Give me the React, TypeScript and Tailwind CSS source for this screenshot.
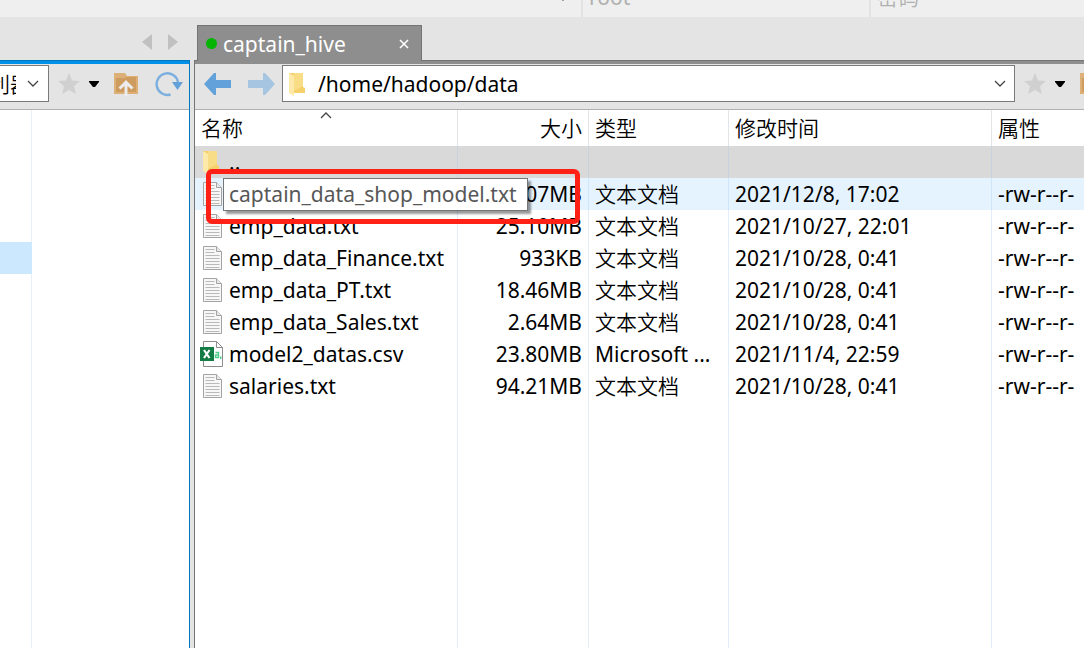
import { useState } from 'react'
import clsx from 'clsx'

type FileKind = 'up' | 'text' | 'csv'

type FileRow = {
  kind: FileKind
  name: string
  size?: string
  type?: string
  modified?: string
  attrs?: string
}

const files: FileRow[] = [
  { kind: 'up', name: '..' },
  { kind: 'text', name: 'captain_data_shop_model.txt', size: '07MB', type: '文本文档', modified: '2021/12/8, 17:02', attrs: '-rw-r--r-' },
  { kind: 'text', name: 'emp_data.txt', size: '25.10MB', type: '文本文档', modified: '2021/10/27, 22:01', attrs: '-rw-r--r-' },
  { kind: 'text', name: 'emp_data_Finance.txt', size: '933KB', type: '文本文档', modified: '2021/10/28, 0:41', attrs: '-rw-r--r-' },
  { kind: 'text', name: 'emp_data_PT.txt', size: '18.46MB', type: '文本文档', modified: '2021/10/28, 0:41', attrs: '-rw-r--r-' },
  { kind: 'text', name: 'emp_data_Sales.txt', size: '2.64MB', type: '文本文档', modified: '2021/10/28, 0:41', attrs: '-rw-r--r-' },
  { kind: 'csv', name: 'model2_datas.csv', size: '23.80MB', type: 'Microsoft ...', modified: '2021/11/4, 22:59', attrs: '-rw-r--r-' },
  { kind: 'text', name: 'salaries.txt', size: '94.21MB', type: '文本文档', modified: '2021/10/28, 0:41', attrs: '-rw-r--r-' },
]

const HOVERED = 1

function Chevron({ up = false }: { up?: boolean }) {
  return (
    <svg width="12" height="7" viewBox="0 0 12 7" fill="none" stroke="#444" strokeWidth="1.3">
      <path d={up ? 'M1 6l5-5 5 5' : 'M1 1l5 5 5-5'} />
    </svg>
  )
}

function Star() {
  return (
    <svg width="24" height="24" viewBox="0 0 24 24" fill="#d0d0d0">
      <path d="M12 1l3 7.500 8 .6-6 5.200 2 7.700-7-4-7 4 2-7.700-6-5.200 8-.6z" />
    </svg>
  )
}

function Caret() {
  return (
    <svg width="10" height="6" viewBox="0 0 10 6">
      <path d="M0 0h10v1L6 6H4L0 1z" fill="#000" />
    </svg>
  )
}

function FolderUp() {
  return (
    <svg width="26" height="24" viewBox="0 0 26 24">
      <path d="M1 1h11l2 3h11v18H1z" fill="#ddb077" />
      <path d="M3 6h9l2-1h9v15H3z" fill="#cf9c5f" />
      <path d="M13 8l7.500 7.500-2 2-4-3.500V24h-3V14l-4 3.500-2-2z" fill="#ececec" />
    </svg>
  )
}

function Refresh() {
  return (
    <svg width="28" height="26" viewBox="0 0 28 26">
      <path d="M15.500 23.500A10.800 10.800 0 1 1 23 11" fill="none" stroke="#7aafdf" strokeWidth="2.400" />
      <path d="M17 11h11l-5.500 8z" fill="#62a1da" />
    </svg>
  )
}

function Arrow({ dir }: { dir: 'back' | 'forward' }) {
  return (
    <svg width="27" height="22" viewBox="0 0 27 22">
      {dir === 'back' ? (
        <path d="M0 11L10 0h2v7h15v8H12v7h-2z" fill="#62a1da" />
      ) : (
        <path d="M27 11L17 0h-2v7H0v8h15v7h2z" fill="#a5c5e1" />
      )}
    </svg>
  )
}

function Folder() {
  return (
    <>
      <path d="M3 1h14v14l2 1v5H8z" fill="#f5d06b" />
      <path d="M8 1h9v13l-9 5z" fill="#f9dd86" />
      <path d="M3 1l5 3v20l-5-3z" fill="#fde9a9" />
    </>
  )
}

function FileIcon({ kind }: { kind: FileKind }) {
  return (
    <svg className="shrink-0" width="24" height="26" viewBox="0 0 24 26">
      {kind === 'up' && <g transform="translate(0 1)"><Folder /></g>}
      {kind === 'text' && (
        <>
          <path d="M3.500 1.500h13l5 5v18h-18z" fill="#f7f7f7" stroke="#a3a3a3" />
          <path d="M16.500 1.500v5h5" fill="#e9e9e9" stroke="#a3a3a3" />
          <path d="M5.500 4.500h9M5.500 7.500h9M5.500 10.500h14M5.500 13.500h14M5.500 16.500h14M5.500 19.500h14M5.500 22.500h14" stroke="#b9b9b9" />
        </>
      )}
      {kind === 'csv' && (
        <>
          <path d="M3.500.500h13l6 6v19h-19z" fill="#fff" stroke="#8c8c8c" />
          <path d="M16.500.500v6h6" fill="none" stroke="#8c8c8c" />
          <path d="M0 6h14v14H0z" fill="#137c44" />
          <path d="M4 9l5.500 8M9.500 9L4 17" stroke="#fff" strokeWidth="2.200" />
          <path d="M15.500 11.500h3v5h-3v-2.500h3M21 15.500l-.5 2.500" fill="none" stroke="#4fc98a" strokeWidth="1.400" />
        </>
      )}
    </svg>
  )
}

function TopStrip() {
  return (
    <div className="flex h-[17px] shrink-0 items-end overflow-hidden bg-[#efefef]">
      <div className="flex h-10 w-[583px] shrink-0 items-center justify-end border-r-2 border-[#e2e2e2] pr-3">
        <button aria-label="主机列表"><Chevron /></button>
      </div>
      <input aria-label="用户名" placeholder="root" className="h-10 w-[288px] shrink-0 border-r-2 border-[#e2e2e2] px-1.5 placeholder:text-[#b0b0b0]" />
      <input aria-label="密码" type="password" placeholder="密码" className="h-10 min-w-0 flex-1 px-1.5 placeholder:text-[#b0b0b0]" />
    </div>
  )
}

function LocalPane() {
  return (
    <section className="flex w-[190px] shrink-0 flex-col">
      <div className="flex h-[43px] shrink-0 items-center justify-end gap-4 pr-3 pt-1.5">
        <button aria-label="上一个标签">
          <svg width="10" height="16" viewBox="0 0 10 16"><path d="M10 0v16L0 8z" fill="#c0c0c0" /></svg>
        </button>
        <button aria-label="下一个标签">
          <svg width="10" height="16" viewBox="0 0 10 16"><path d="M0 0v16l10-8z" fill="#c0c0c0" /></svg>
        </button>
      </div>
      <div className="flex min-h-0 flex-1 flex-col border-r border-[#0078c0]">
        <div className="h-1 shrink-0 border-t border-[#0078c0] bg-[#0090e8]" />
        <div className="flex h-[46px] shrink-0 items-center justify-end overflow-hidden border-b border-[#b0b0b0] pb-1.5 pr-1.5">
          <div className="flex h-[37px] w-[61px] shrink-0 items-center border border-[#7a7a7a] bg-white">
            <input aria-label="本地路径" defaultValue="利器" className="w-[27px] shrink-0" />
            <button aria-label="展开本地路径" className="ml-[11px]"><Chevron /></button>
          </div>
          <button aria-label="本地书签" className="ml-2 flex shrink-0 items-center gap-2"><Star /><Caret /></button>
          <button aria-label="本地上级目录" className="ml-[14px] shrink-0"><FolderUp /></button>
          <button aria-label="刷新" className="ml-4 shrink-0"><Refresh /></button>
        </div>
        <div className="flex min-h-0 flex-1 bg-white">
          <div className="w-8 border-r border-[#e5f0fa] pt-[132px]">
            <div className="-mr-px h-8 bg-[#cce8ff]" />
          </div>
        </div>
      </div>
    </section>
  )
}

function FileTable() {
  const headers = ['名称', '大小', '类型', '修改时间', '属性']
  const cell = 'border-r border-[#a0c8f0]/30 p-0 px-1.5 whitespace-nowrap'

  return (
    <table className="h-full w-full table-fixed border-separate border-spacing-0">
      <colgroup>
        <col className="w-[263px]" />
        <col className="w-[131px]" />
        <col className="w-[140px]" />
        <col className="w-[263px]" />
        <col />
      </colgroup>
      <thead>
        <tr className="h-9">
          {headers.map((h, i) => (
            <th
              key={h}
              className={clsx('relative p-0 px-1.5 font-normal', i < 4 && 'border-r border-[#e2e4e6]', i === 1 ? 'text-right' : 'text-left')}
            >
              {i === 0 && <span className="absolute inset-x-0 top-0.5 flex justify-center"><Chevron up /></span>}
              {h}
            </th>
          ))}
        </tr>
      </thead>
      <tbody>
        {files.map((f, i) => (
          <tr key={f.name} className={clsx('h-8', f.kind === 'up' && 'bg-[#d9d9d9]', i === HOVERED && 'bg-[#e5f3ff]')}>
            <td className={clsx(cell, 'relative')}>
              <div className="-ml-px flex items-center gap-[5px]">
                <FileIcon kind={f.kind} />
                {i !== HOVERED && f.name}
              </div>
              {i === HOVERED && (
                <>
                  <div role="tooltip" className="absolute left-7 top-0 z-10 flex h-[33px] w-[305px] items-center border border-[#767676] bg-white pb-0.5 pl-[5px] text-[#575757] shadow-[3px_3px_2px_rgba(0,0,0,0.4)]">
                    {f.name}
                  </div>
                  <div className="pointer-events-none absolute -top-[9px] left-[11px] z-10 h-[55px] w-[374px] rounded-md border-[5px] border-[#ff2116]" />
                </>
              )}
            </td>
            <td className={clsx(cell, 'text-right')}>{f.size}</td>
            <td className={cell}>{f.type}</td>
            <td className={cell}>{f.modified}</td>
            <td className="overflow-hidden p-0 px-1.5 whitespace-nowrap">{f.attrs}</td>
          </tr>
        ))}
        <tr>
          <td className={cell} />
          <td className={cell} />
          <td className={cell} />
          <td className={cell} />
          <td />
        </tr>
      </tbody>
    </table>
  )
}

function RemotePane() {
  const [path, setPath] = useState('/home/hadoop/data')

  return (
    <section className="ml-1 flex min-w-0 flex-1 flex-col">
      <div className="flex h-[43px] shrink-0 items-end pl-[3px]">
        <div className="z-10 -mb-px flex h-9 w-[225px] items-center border border-b-0 border-[#747474] bg-[#8e8e8e] pl-2 pr-3 text-white">
          <span className="size-[11px] rounded-full bg-[#05b405]" />
          <span className="ml-1.5 flex-1">captain_hive</span>
          <button aria-label="关闭标签">
            <svg width="10" height="10" viewBox="0 0 10 10" stroke="#fff" strokeWidth="1.600"><path d="M1 1l8 8M9 1L1 9" /></svg>
          </button>
        </div>
      </div>
      <div className="flex min-h-0 flex-1 flex-col border-l border-[#747474]">
        <div className="h-1 shrink-0 border-t border-[#747474] bg-[#8e8e8e]" />
        <div className="flex h-[46px] shrink-0 items-center overflow-hidden border-b border-[#b0b0b0] pb-1.5 pl-[9px]">
          <button aria-label="后退" className="shrink-0"><Arrow dir="back" /></button>
          <button aria-label="前进" className="ml-[17px] shrink-0"><Arrow dir="forward" /></button>
          <div className="ml-[7px] flex h-[37px] min-w-0 flex-1 items-center border border-[#7a7a7a] bg-white pl-[3px] pr-2">
            <svg className="shrink-0" width="24" height="24" viewBox="0 0 24 24"><Folder /></svg>
            <input
              aria-label="远程路径"
              value={path}
              onChange={(e) => setPath(e.target.value)}
              className="ml-2 min-w-0 flex-1 outline-none"
            />
            <button aria-label="展开远程路径"><Chevron /></button>
          </div>
          <div className="flex w-[69px] shrink-0 items-center overflow-hidden pl-2">
            <button aria-label="远程书签" className="flex shrink-0 items-center gap-2"><Star /><Caret /></button>
            <button aria-label="远程上级目录" className="ml-[14px] shrink-0"><FolderUp /></button>
          </div>
        </div>
        <div className="min-h-0 flex-1 overflow-hidden bg-white">
          <FileTable />
        </div>
      </div>
    </section>
  )
}

export default function App() {
  return (
    <div className="flex h-screen flex-col overflow-hidden bg-[#e4e4e4] font-['Noto_Sans','Noto_Sans_CJK_SC_DemiLight','Noto_Sans_CJK_SC',sans-serif] text-[21px] leading-7 text-black">
      <TopStrip />
      <main className="flex min-h-0 flex-1">
        <LocalPane />
        <RemotePane />
      </main>
    </div>
  )
}
